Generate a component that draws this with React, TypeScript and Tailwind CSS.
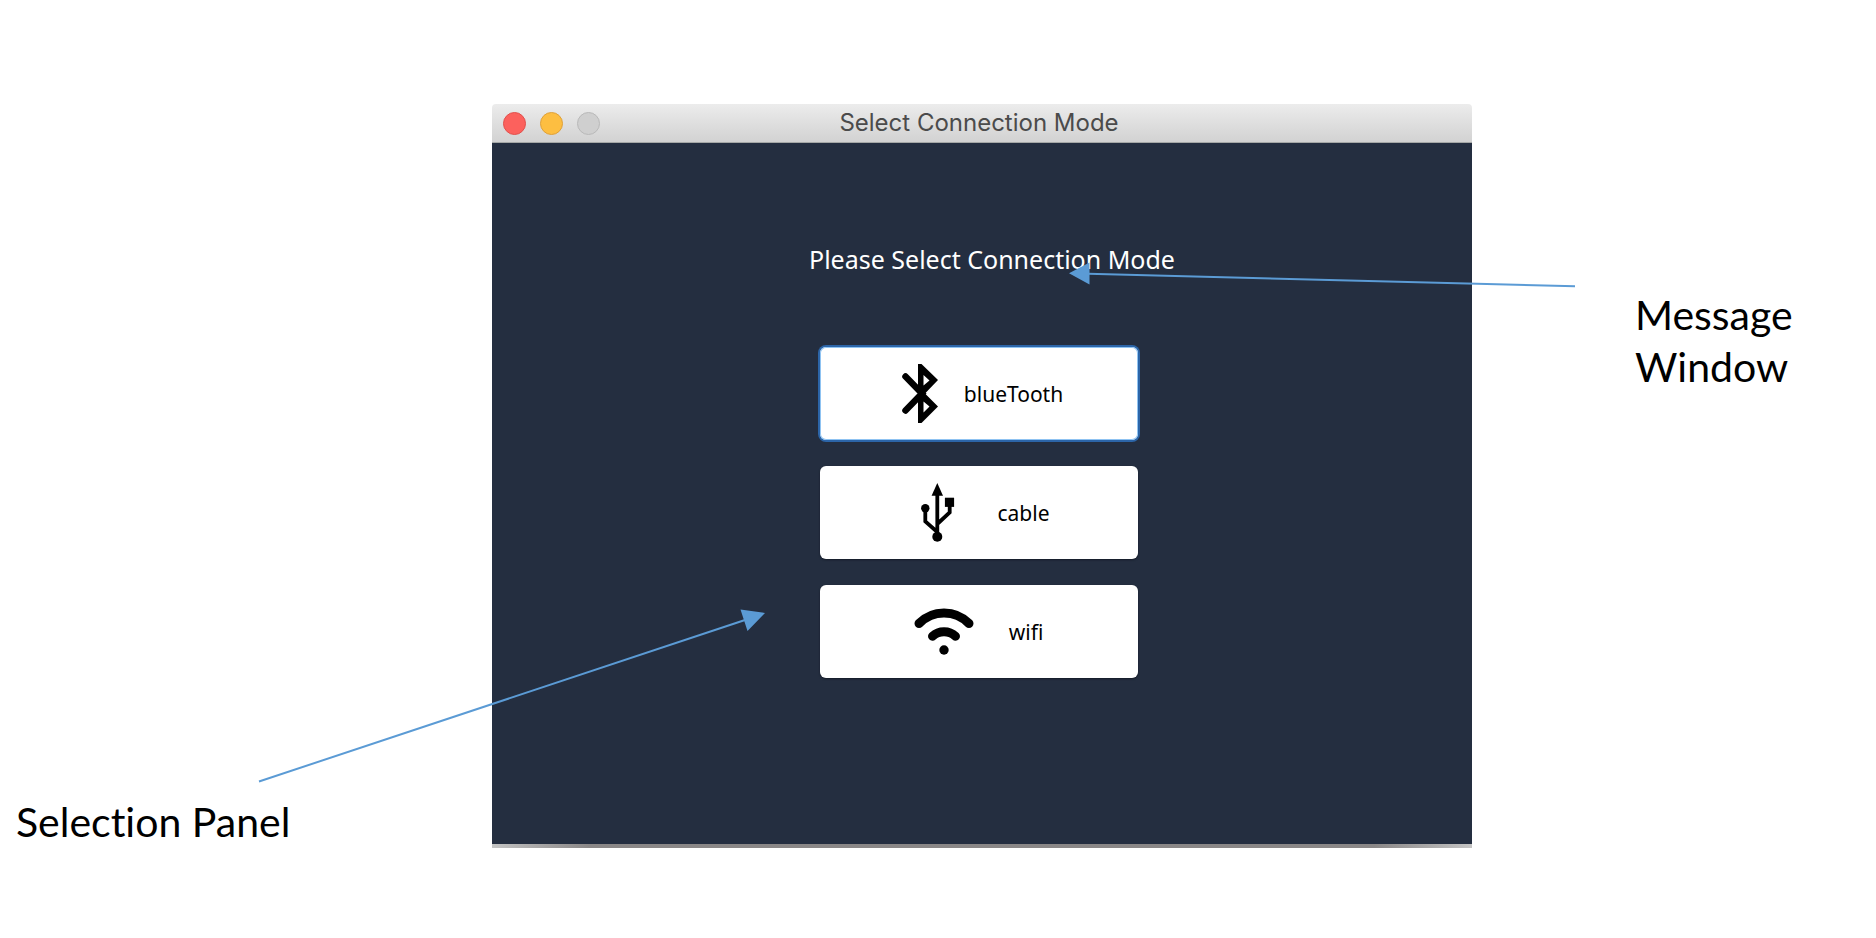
import type { ReactNode } from 'react';

function BluetoothIcon() {
  return (
    <svg aria-hidden="true" className="size-[59px] shrink-0" viewBox="0 0 59 59">
      <path
        fillRule="evenodd"
        d="M27 0h3.500L47 16 34 29.500 47 42.500 30.500 59h-3.500zM32.500 11v10.500l6-5zM32.500 37.500v11l6-6z"
      />
      <path d="M14.500 12.500 31 29.500 14.500 46.500" fill="none" stroke="#000" strokeWidth="6.500" strokeLinecap="round" />
    </svg>
  );
}

function UsbIcon() {
  return (
    <svg aria-hidden="true" className="size-[59px] shrink-0" viewBox="0 0 59 59">
      <path d="M29.300 0 35 12.700H23.600z" />
      <path
        d="M29.300 10v44M17.300 25v13.500L29.300 49M41.700 22v7.500L29.300 41"
        fill="none"
        stroke="#000"
        strokeWidth="3.800"
      />
      <circle cx="29.300" cy="53.800" r="5" />
      <circle cx="17.300" cy="25.300" r="4.200" />
      <path d="M36.900 14.700h9.200v9.200h-9.200z" />
    </svg>
  );
}

function WifiIcon() {
  return (
    <svg aria-hidden="true" className="size-[59px] shrink-0 overflow-visible" viewBox="0 0 59 59">
      <path
        d="M4 21.500A35 35 0 0 1 54 21.500M17.500 34.300A17 17 0 0 1 40.500 34.300"
        fill="none"
        stroke="#000"
        strokeWidth="9"
        strokeLinecap="round"
      />
      <circle cx="29" cy="48" r="4.700" />
    </svg>
  );
}

type ModeButtonProps = { label: string; icon: ReactNode; className: string };

function ModeButton({ label, icon, className }: ModeButtonProps) {
  return (
    <button
      type="button"
      className={`flex h-[93px] w-full items-center justify-center rounded-md bg-white text-[21px] leading-7 text-black ${className}`}
    >
      {icon}
      <span>{label}</span>
    </button>
  );
}

function Arrows() {
  return (
    <svg
      aria-hidden="true"
      className="pointer-events-none absolute inset-0 h-full w-full"
      viewBox="0 0 1876 938"
      preserveAspectRatio="none"
      fill="#5b9bd5"
      stroke="none"
    >
      <path d="M1088 273.800 1575 286.300M259 781.500 745 620" stroke="#5b9bd5" strokeWidth="2" />
      <path d="M1069 273.300 1089.500 262.500V284.500zM765 613 740.500 609.500 747.500 631z" />
    </svg>
  );
}

export default function App() {
  return (
    <main className="relative grid min-h-screen grid-cols-[492fr_980fr_404fr] bg-white pt-[104px] pb-[90px] text-black">
      <p className="self-end pl-4 font-['Lato',sans-serif] text-[41px] leading-[52px] whitespace-nowrap [font-variant-ligatures:none]">
        Selection Panel
      </p>

      <section className="flex flex-col">
        <header className="grid h-[39px] grid-cols-[1fr_auto_1fr] items-center rounded-t-sm border-b border-[#a5a8a7] bg-linear-to-b from-[#ececec] to-[#d2d2d2] pr-1.5">
          <div className="flex gap-[14px] pl-[11px]">
            <button type="button" aria-label="Close" className="size-[23px] rounded-full border border-[#e2504c] bg-[#fc615d]" />
            <button type="button" aria-label="Minimize" className="size-[23px] rounded-full border border-[#dfa13a] bg-[#fdbe41]" />
            <button type="button" aria-label="Zoom" disabled className="size-[23px] rounded-full border border-[#b9b9b9] bg-[#cfcfcf]" />
          </div>
          <h1 className="font-['Inter',sans-serif] text-[24px] leading-8 text-[#4b4b4b]">Select Connection Mode</h1>
        </header>

        <div className="flex flex-1 flex-col items-center bg-[#242e40] pt-[100px] font-['Noto_Sans',sans-serif]">
          <p className="pl-5 text-[25px] leading-8 text-white">Please Select Connection Mode</p>
          <div className="mt-[72px] mr-1.5 flex w-[318px] flex-col gap-[26px]">
            <ModeButton
              label="blueTooth"
              icon={<BluetoothIcon />}
              className="gap-[14px] pr-1 shadow-[0_0_0_2px_#2c65a8] ring-1 ring-[#8fc3f2] ring-inset"
            />
            <ModeButton label="cable" icon={<UsbIcon />} className="gap-[30px] shadow-[0_1px_2px_#141a26]" />
            <ModeButton label="wifi" icon={<WifiIcon />} className="gap-[35px] shadow-[0_1px_2px_#141a26]" />
          </div>
        </div>
        <div className="h-1 bg-linear-to-r from-[#c4c4c4] from-0% via-[#8a8787] via-10% to-[#8a8787] to-90%">
          <div className="ml-auto h-full w-1/10 bg-linear-to-r from-[#8a8787] to-[#c4c4c4]" />
        </div>
      </section>

      <p className="pt-[185px] pl-[163px] font-['Lato',sans-serif] text-[41px] leading-[52px] [font-variant-ligatures:none]">
        Message
        <br />
        Window
      </p>

      <Arrows />
    </main>
  );
}
